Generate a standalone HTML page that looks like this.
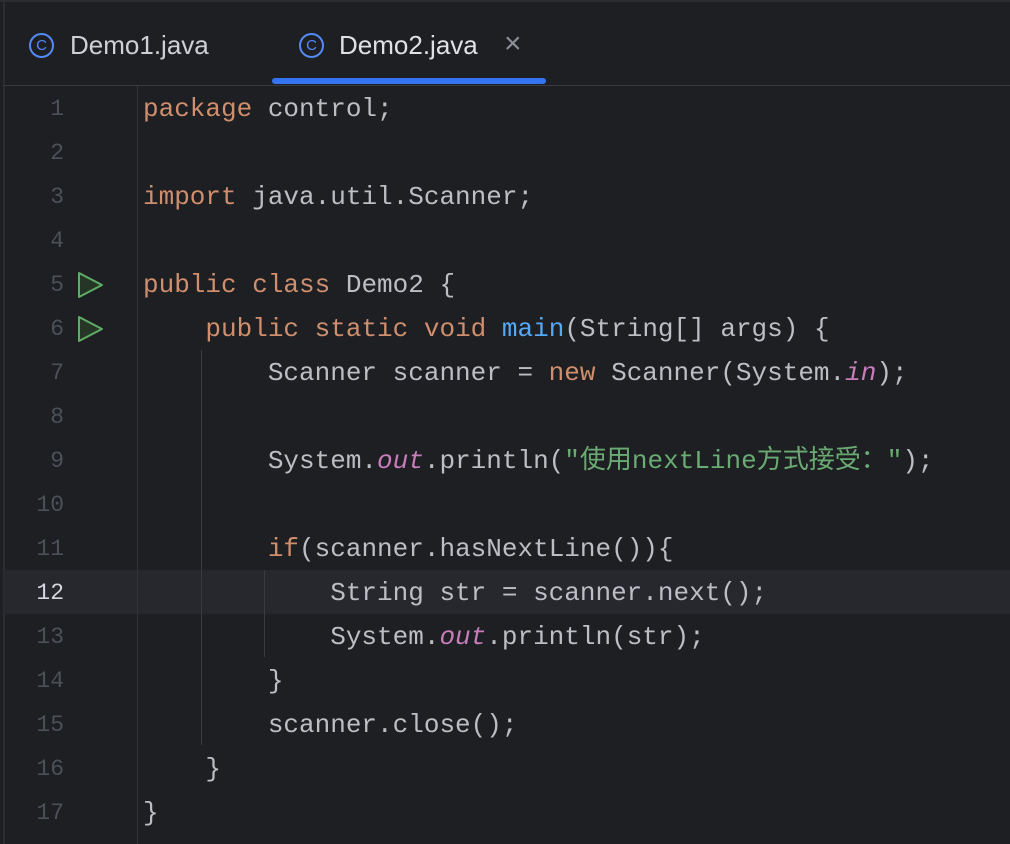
<!DOCTYPE html>
<html><head><meta charset="utf-8"><style>
body{margin:0;width:1010px;height:844px;background:#1e1f22;overflow:hidden;position:relative;font-family:"Liberation Mono","Noto Sans CJK SC",monospace;}
.tabbar{position:absolute;left:0;top:0;width:1010px;height:85px;border-top:2px solid #2b2d30;box-sizing:border-box;}
.tab{position:absolute;top:30px;font-family:"Liberation Sans",sans-serif;font-size:26px;color:#dfe1e5;}
.ic{position:absolute;top:33px;width:25px;height:25px;border:2px solid #548af7;border-radius:50%;box-sizing:border-box;color:#548af7;font:15px "Liberation Sans",sans-serif;text-align:center;line-height:21px;}
.sep{position:absolute;left:4px;top:85px;width:1006px;height:1px;background:#393b40;}
.ul{position:absolute;left:272px;top:78px;width:274px;height:6px;border-radius:3px;background:#3574f0;}
.lb{position:absolute;left:3px;top:0;width:2px;height:844px;background:#2b2d30;}
.gut{position:absolute;left:137px;top:86px;width:1px;height:758px;background:#313438;}
.cur{position:absolute;left:4px;top:570px;width:1006px;height:44px;background:#26282e;}
.ln{position:absolute;left:0;width:64px;text-align:right;font-size:23px;color:#4b5059;line-height:46px;}
.code{position:absolute;left:143px;font-size:26px;color:#bcbec4;line-height:46px;white-space:pre;}
.k{color:#cf8e6d}.f{color:#56a8f5}.s{color:#6aab73}.o{color:#c77dbb;font-style:italic}
.guide{position:absolute;width:1px;background:#393b40;}
.run{position:absolute;left:77px;}
</style></head><body>
<div class="lb"></div>
<div class="tabbar"></div>
<div class="ic" style="left:29px">C</div><div class="tab" style="left:70px;color:#ced0d6">Demo1.java</div>
<div class="ic" style="left:299px">C</div><div class="tab" style="left:339px">Demo2.java</div>
<div class="tab" style="left:504px;top:27px;color:#8c8f96;font-size:30px">×</div>
<div class="sep"></div><div class="ul"></div>
<div class="cur"></div>
<div class="gut"></div>
<div class="guide" style="left:201px;top:350px;height:395px"></div>
<div class="guide" style="left:264px;top:570px;height:87px"></div>
<svg class="run" style="top:271px" width="28" height="28"><path d="M2 2 L25 14 L2 26 Z" fill="#253627" stroke="#5fad65" stroke-width="2" stroke-linejoin="round"/></svg>
<svg class="run" style="top:315px" width="28" height="28"><path d="M2 2 L25 14 L2 26 Z" fill="#253627" stroke="#5fad65" stroke-width="2" stroke-linejoin="round"/></svg>
<div class="ln" style="top:86px">1</div>
<div class="ln" style="top:130px">2</div>
<div class="ln" style="top:174px">3</div>
<div class="ln" style="top:218px">4</div>
<div class="ln" style="top:262px">5</div>
<div class="ln" style="top:306px">6</div>
<div class="ln" style="top:350px">7</div>
<div class="ln" style="top:394px">8</div>
<div class="ln" style="top:438px">9</div>
<div class="ln" style="top:482px">10</div>
<div class="ln" style="top:526px">11</div>
<div class="ln" style="top:570px;color:#d5d7dc">12</div>
<div class="ln" style="top:614px">13</div>
<div class="ln" style="top:658px">14</div>
<div class="ln" style="top:702px">15</div>
<div class="ln" style="top:746px">16</div>
<div class="ln" style="top:790px">17</div>
<div class="code" style="top:86px"><span class="k">package</span> control;</div>
<div class="code" style="top:174px"><span class="k">import</span> java.util.Scanner;</div>
<div class="code" style="top:262px"><span class="k">public class</span> Demo2 {</div>
<div class="code" style="top:306px">    <span class="k">public static void</span> <span class="f">main</span>(String[] args) {</div>
<div class="code" style="top:350px">        Scanner scanner = <span class="k">new</span> Scanner(System.<span class="o">in</span>);</div>
<div class="code" style="top:438px">        System.<span class="o">out</span>.println(<span class="s">"使用nextLine方式接受："</span>);</div>
<div class="code" style="top:526px">        <span class="k">if</span>(scanner.hasNextLine()){</div>
<div class="code" style="top:570px">            String str = scanner.next();</div>
<div class="code" style="top:614px">            System.<span class="o">out</span>.println(str);</div>
<div class="code" style="top:658px">        }</div>
<div class="code" style="top:702px">        scanner.close();</div>
<div class="code" style="top:746px">    }</div>
<div class="code" style="top:790px">}</div>
</body></html>
